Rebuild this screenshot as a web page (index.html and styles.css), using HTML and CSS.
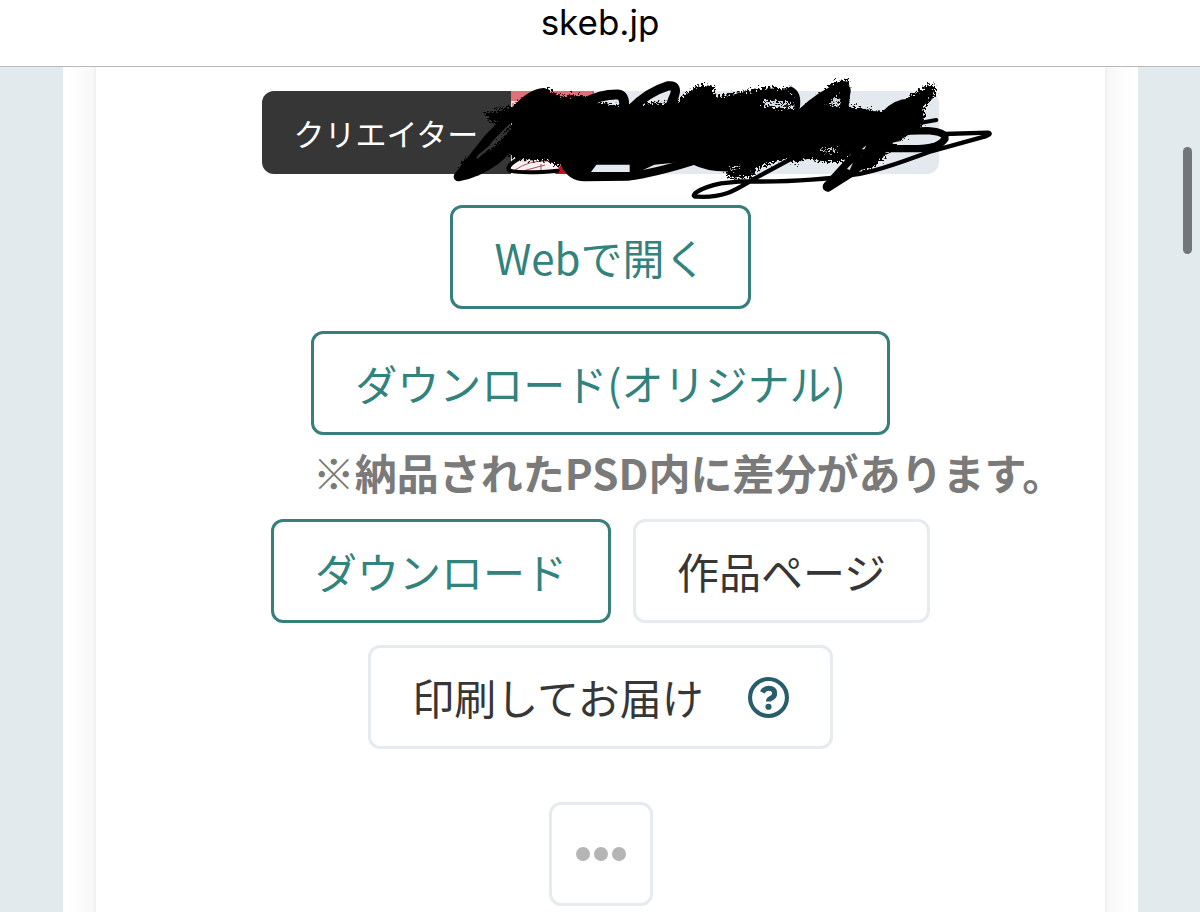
FILE: index.html
```html
<!DOCTYPE html>
<html lang="ja">
<head>
    <meta charset="UTF-8">
    <meta name="viewport" content="width=device-width, initial-scale=1.0">
    <title>skeb.jp</title>
    <link rel="stylesheet" href="styles.css">
</head>
<body>
    <header class="address-bar">skeb.jp</header>

    <div class="viewport">
        <main class="column">
            <section class="card">
                <div class="creator">
                    <span class="creator-label">クリエイター</span>
                    <span class="creator-avatar">
                        <svg viewBox="0 0 83 83" aria-hidden="true">
                            <rect width="83" height="83" fill="#e06f78"/>
                            <path d="M0 10h36v73H0z" fill="#f5d9dc"/>
                            <path d="M0 66h83v17H0z" fill="#fbf1f3"/>
                            <path d="M44 83l10-16 22 4-4 12z" fill="#c5121f"/>
                            <path d="M4 79q14-10 34-9M8 81l26-7M30 73v9M60 70l17 8M2 12v8M7 11v9M82 0v83" fill="none" stroke="#b04b58"/>
                        </svg>
                    </span>
                    <span class="creator-name"></span>

                    <!-- pen marks over the name -->
                    <svg class="scribble" viewBox="0 0 1680 420" aria-hidden="true">
                        <defs>
                            <filter id="chalk" x="-5%" y="-20%" width="110%" height="140%">
                                <feTurbulence type="fractalNoise" baseFrequency="0.16" numOctaves="2" seed="4"/>
                                <feDisplacementMap in="SourceGraphic" scale="40" xChannelSelector="R" yChannelSelector="G"/>
                            </filter>
                        </defs>
                        <g filter="url(#chalk)">
                            <path d="M132 130L210 108 300 66 322 54 350 76 430 76 460 96 560 108 640 98 700 98 722 78 780 44 816 48 822 78 900 66 980 52 1050 56 1066 80 1068 108 1020 112 1000 92 966 92 966 108 1080 120 1180 35 1222 28 1222 90 1160 104 1250 112 1320 126 1390 100 1410 74 1476 40 1486 66 1450 115 1450 160 1380 210 1300 290 1276 304 1258 300 1260 220 1210 276 1140 276 1110 264 1056 280 1048 262 960 290 924 324 864 326 850 290 800 280 760 262 640 276 500 276 400 296 340 284 320 272 220 270 190 240 110 312 60 300 60 272 160 230 214 160 150 158z"/>
                        </g>
                        <path d="M240 124L400 84 560 120 830 100 1060 128 1250 118 1320 126 1380 130 1440 170 1330 240 1140 262 1050 262 860 296 760 272 640 284 562 320 420 314 340 266 220 240 200 200z"/>
                        <g fill="none" stroke="#000" stroke-linecap="round" stroke-linejoin="round">
                            <path stroke-width="28" d="M308 68Q270 70 226 120L144 204 52 320Q110 310 164 270L220 220"/>
                            <path stroke-width="30" d="M430 100Q480 72 535 74 556 82 546 126"/>
                            <path stroke-width="28" d="M570 118Q620 66 680 48 716 44 696 86L680 130"/>
                            <path stroke-width="16" d="M1050 58Q1076 70 1068 116"/>
                            <path stroke-width="26" d="M1080 130Q1140 72 1208 46L1216 60 1208 124"/>
                            <path stroke-width="44" d="M1340 140Q1370 106 1410 108L1420 150"/>
                            <path stroke-width="12" d="M1440 158L1486 150"/>
                            <path stroke-width="22" d="M1380 184L1460 182Q1516 186 1512 206 1494 234 1430 236L1320 236"/>
                            <path stroke-width="13" d="M1510 192L1640 188Q1656 190 1630 200L1470 244Q1300 308 1240 314 1100 338 900 334L840 340C770 354 740 382 770 380 850 384 880 362 940 326L1070 256"/>
                            <path stroke-width="30" d="M1260 240L1160 350 1230 306 1310 240"/>
                            <path stroke-width="12" d="M240 262Q190 290 206 302 250 312 350 302"/>
                            <path stroke-width="24" d="M370 280Q390 322 430 322L560 320Q640 310 760 272 800 294 870 292"/>
                        </g>
                        <g fill="#e3e9ee">
                            <path d="M500 94Q515 88 530 90L526 98 500 100z"/>
                            <path d="M466 284H566V306H450z"/>
                            <path d="M1355 218Q1400 206 1490 206 1494 220 1440 222H1355z"/>
                            <path d="M1218 296L1236 278 1226 300z"/>
                            <path d="M1262 238L1276 226 1270 238z"/>
                        </g>
                        <g filter="url(#chalk)" fill="#d3d8dc">
                            <path d="M974 96H1052V106H980z"/>
                            <path d="M1166 102L1192 74 1192 98z"/>
                            <path d="M1144 238L1190 236 1180 246 1144 244z"/>
                            <path d="M868 296L900 286 880 300z"/>
                        </g>
                        <path d="M212 172L196 192 108 268Q104 262 112 254z" fill="#363636"/>
                    </svg>
                </div>

                <div class="buttons">
                    <button type="button" class="button primary">Webで開く</button>
                </div>
                <div class="buttons">
                    <button type="button" class="button primary">ダウンロード(オリジナル)</button>
                </div>
                <p class="note">※納品されたPSD内に差分があります。</p>
                <div class="buttons">
                    <button type="button" class="button primary">ダウンロード</button>
                    <button type="button" class="button">作品ページ</button>
                </div>
                <div class="buttons">
                    <button type="button" class="button">
                        印刷してお届け
                        <svg class="help" viewBox="0 0 40 40" aria-hidden="true">
                            <circle cx="20" cy="20" r="18" fill="none" stroke="#285d6a" stroke-width="4"/>
                            <path d="M14 15Q16 11 20 11 26 11 26 16 26 19 22 21 20 22 20 24" fill="none" stroke="#285d6a" stroke-width="5"/>
                            <circle cx="20" cy="29" r="3" fill="#285d6a"/>
                        </svg>
                    </button>
                </div>
                <div class="buttons more">
                    <button type="button" class="button square" aria-label="その他">
                        <svg class="dots" viewBox="0 0 52 16" aria-hidden="true">
                            <circle cx="8" cy="8" r="7"/>
                            <circle cx="26" cy="8" r="7"/>
                            <circle cx="44" cy="8" r="7"/>
                        </svg>
                    </button>
                </div>
            </section>
        </main>
        <div class="scroll-thumb"></div>
    </div>
</body>
</html>
```

FILE: styles.css
```css
* {
    box-sizing: border-box;
}
body {
    margin: 0;
    min-height: 100vh;
    display: flex;
    flex-direction: column;
    background-color: #e3eaee;
    color: #363636;
    font-family: "Noto Sans CJK JP", sans-serif;
}
.address-bar {
    height: 67px;
    background-color: #fff;
    border-bottom: 1px solid #b8b8b8;
    color: #000;
    font-family: Inter, sans-serif;
    font-size: 35px;
    line-height: 44px;
    text-align: center;
}
.viewport {
    position: relative;
    flex: 1;
    display: flex;
    padding: 0 62px 0 63px;
}
.column {
    flex: 1;
    display: flex;
    padding: 0 33px;
    background-color: #fff;
    overflow: hidden;
}
.card {
    flex: 1;
    display: flex;
    flex-direction: column;
    align-items: center;
    margin: -40px 0;
    padding: 64px 0 46px;
    background-color: #fff;
    box-shadow: 0 0 32px rgba(10, 10, 10, 0.08), 0 0 0 2px rgba(10, 10, 10, 0.02);
}
.creator {
    position: relative;
    display: flex;
    height: 83px;
    margin-bottom: 31px;
}
.creator-label {
    padding: 0 33px 0 32px;
    border-radius: 12px 0 0 12px;
    background-color: #363636;
    color: #fff;
    font-size: 31px;
    line-height: 83px;
}
.creator-avatar {
    width: 83px;
}
.creator-avatar svg {
    display: block;
}
.creator-name {
    width: 345px;
    border-radius: 0 12px 12px 0;
    background-color: #e3e9ee;
}
.scribble {
    position: absolute;
    left: 179px;
    top: -21px;
    width: 560px;
    height: 140px;
}
.buttons {
    display: flex;
    justify-content: center;
    gap: 22px;
    margin-bottom: 22px;
}
.button {
    display: flex;
    align-items: center;
    justify-content: center;
    gap: 44px;
    height: 104px;
    padding: 0 41px;
    border: 3px solid #e6ebf0;
    border-radius: 12px;
    background-color: #fff;
    color: #363636;
    font-family: inherit;
    font-size: 42px;
    line-height: 62px;
    white-space: nowrap;
}
.button.primary {
    border-color: #377f7b;
    color: #32827d;
}
.button.square {
    width: 104px;
    padding: 0;
}
.note {
    margin: -16px 0 16px;
    padding-left: 176px;
    color: #7a7a7a;
    font-size: 42px;
    font-weight: bold;
    line-height: 62px;
    white-space: nowrap;
}
.help {
    width: 41px;
    height: 41px;
}
.more {
    margin: 31px 0 0;
}
.dots {
    width: 52px;
    height: 16px;
    fill: #b5b5b5;
}
.scroll-thumb {
    position: absolute;
    top: 80px;
    right: 8px;
    width: 9px;
    height: 107px;
    border-radius: 5px;
    background-color: #737678;
}
```
